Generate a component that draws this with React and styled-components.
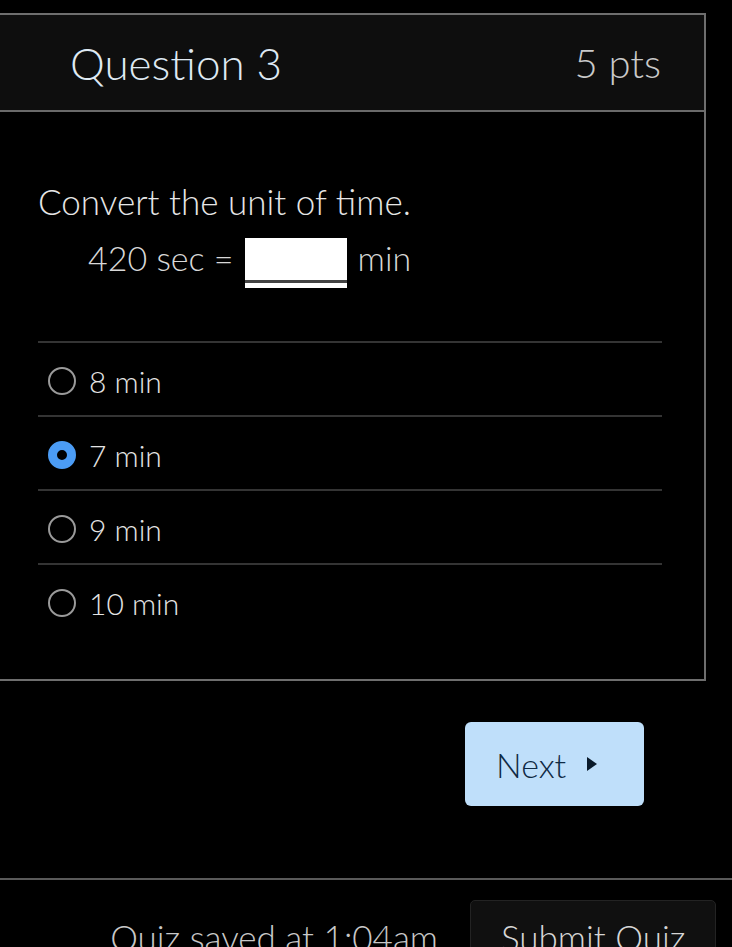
import React from "react";
import styled, { createGlobalStyle } from "styled-components";

const Global = createGlobalStyle`
  html, body { margin: 0; padding: 0; background: #000; }
  body {
    font-family: Lato, "Open Sans", sans-serif;
    font-weight: 300;
    color: #e8e8e8;
    overflow: hidden;
  }
`;

const Page = styled.div`
  width: 732px;
  height: 947px;
  padding-top: 13px;
  box-sizing: border-box;
  overflow: hidden;
`;

const Card = styled.section`
  margin: 0 26px 0 -2px;
  border: 2px solid #6e6e6e;
`;

const Header = styled.header`
  height: 97px;
  box-sizing: border-box;
  background: #0e0e0e;
  border-bottom: 2px solid #6a6a6a;
  display: flex;
  align-items: center;
  justify-content: space-between;
  padding: 0 43px 0 70px;
`;

const Title = styled.h2`
  margin: 0;
  font-weight: 300;
  font-size: 44px;
  color: #dfe9f3;
`;

const Points = styled.span`
  font-size: 40px;
  color: #c9c9c9;
`;

const Body = styled.div`
  padding: 69px 42px 42px 38px;
`;

const Prompt = styled.p`
  margin: 0;
  font-size: 35px;
  line-height: 40px;
  color: #e6e6e6;
`;

const Equation = styled.div`
  display: flex;
  align-items: center;
  gap: 11px;
  margin: 6px 0 0 50px;
  font-size: 34px;
  color: #d8d8d8;
`;

const Blank = styled.span`
  width: 102px;
  height: 50px;
  box-sizing: border-box;
  background: #fff;
  border-bottom: 5px solid #fff;
  box-shadow: inset 0 -3px 0 #444;
  margin-top: 11px;
`;

const Answers = styled.ul`
  list-style: none;
  margin: 53px 0 0;
  padding: 0;
`;

const Answer = styled.li`
  height: 74px;
  box-sizing: border-box;
  border-top: 2px solid #343434;
  display: flex;
  align-items: center;
  gap: 13px;
  padding: 3px 0 0 10px;
  font-size: 30px;
  color: #e4e4e4;
`;

const Radio = styled.span`
  width: 28px;
  height: 28px;
  box-sizing: border-box;
  border-radius: 50%;
  border: ${(p) => (p.$checked ? "9px solid #4b9cf5" : "2.5px solid #9a9a9a")};
  background: ${(p) => (p.$checked ? "#000" : "transparent")};
  flex: none;
`;

const NextRow = styled.div`
  display: flex;
  justify-content: flex-end;
  padding: 41px 88px 0 0;
`;

const NextButton = styled.button`
  width: 179px;
  height: 84px;
  border: none;
  border-radius: 6px;
  background: #bfdffa;
  color: #0f2a44;
  font-family: Lato, sans-serif;
  font-weight: 300;
  font-size: 34px;
  display: flex;
  align-items: center;
  gap: 20px;
  padding: 0 0 0 31px;
`;

const Divider = styled.hr`
  margin: 72px 0 0;
  border: none;
  border-top: 2px solid #5a5a5a;
`;

const Footer = styled.div`
  display: flex;
  align-items: flex-start;
  justify-content: flex-end;
  gap: 32px;
  padding: 20px 16px 0 0;
`;

const Saved = styled.span`
  font-size: 35px;
  color: #c8c8c8;
  margin-top: 16px;
`;

const Submit = styled.button`
  width: 246px;
  height: 90px;
  border: 1px solid #232323;
  border-radius: 5px;
  background: #101010;
  color: #d6d6d6;
  font-family: Lato, sans-serif;
  font-weight: 300;
  font-size: 35px;
  line-height: 40px;
  text-align: left;
  padding: 16px 0 0 30px;
  display: flex;
  align-items: flex-start;
`;

const options = [
  { label: "8 min" },
  { label: "7 min", checked: true },
  { label: "9 min" },
  { label: "10 min" },
];

export default function App() {
  return (
    <>
      <Global />
      <Page>
        <Card>
          <Header>
            <Title>Question 3</Title>
            <Points>5 pts</Points>
          </Header>
          <Body>
            <Prompt>Convert the unit of time.</Prompt>
            <Equation>
              <span>420 sec =</span>
              <Blank />
              <span>min</span>
            </Equation>
            <Answers>
              {options.map((o) => (
                <Answer key={o.label}>
                  <Radio $checked={o.checked} />
                  {o.label}
                </Answer>
              ))}
            </Answers>
          </Body>
        </Card>
        <NextRow>
          <NextButton>
            Next
            <svg width="12" height="16" viewBox="0 0 12 16">
              <path d="M1 1 L11 8 L1 15 Z" fill="#0a1a2a" />
            </svg>
          </NextButton>
        </NextRow>
        <Divider />
        <Footer>
          <Saved>Quiz saved at 1:04am</Saved>
          <Submit>Submit Quiz</Submit>
        </Footer>
      </Page>
    </>
  );
}
